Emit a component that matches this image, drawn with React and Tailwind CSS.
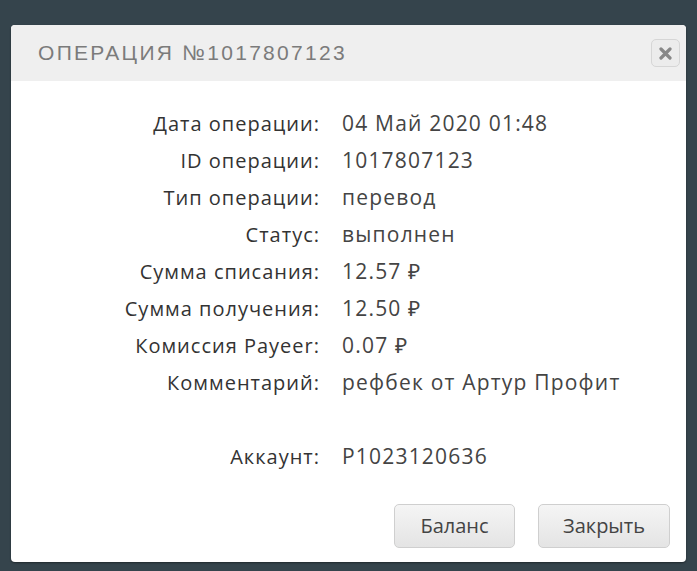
const rows = [
  ['Дата операции:', '04 Май 2020 01:48'],
  ['ID операции:', '1017807123'],
  ['Тип операции:', 'перевод'],
  ['Статус:', 'выполнен'],
  ['Сумма списания:', '12.57 ₽'],
  ['Сумма получения:', '12.50 ₽'],
  ['Комиссия Payeer:', '0.07 ₽'],
  ['Комментарий:', 'рефбек от Артур Профит'],
];

function Row({ label, value }) {
  return (
    <div className="flex h-[37px] items-center">
      <div className="w-[309px] shrink-0 text-right text-[20px] tracking-[1px] text-[#333]">{label}</div>
      <div className="pl-[22px] text-[21px] tracking-[1.2px] text-[#444]">{value}</div>
    </div>
  );
}

export default function App() {
  return (
    <div className="min-h-[571px] bg-[#35444c] pt-[25px] pl-[11px] pr-[11px]">
      <div className="w-[675px] h-[537px] rounded-[4px] bg-white shadow-[0_1px_2px_rgba(0,0,0,0.4)] overflow-hidden flex flex-col">
        <div className="h-[56px] bg-[#efefef] flex items-center justify-between pl-[27px] pr-[6px]">
          <h1 className="text-[21px] tracking-[2.3px] text-[#7b7b7b] font-['Liberation_Sans',sans-serif] uppercase">
            Операция №1017807123
          </h1>
          <button className="w-[29px] h-[28px] rounded-[5px] border border-[#d6d6d6] bg-[#ececec] flex items-center justify-center">
            <svg width="13" height="13" viewBox="0 0 13 13">
              <path d="M2 2 L11 11 M11 2 L2 11" stroke="#888" strokeWidth="3.2" strokeLinecap="round" />
            </svg>
          </button>
        </div>
        <div className="flex-1 font-['Open_Sans',sans-serif] pt-[24px]">
          {rows.map(([l, v]) => (
            <Row key={l} label={l} value={v} />
          ))}
          <div className="h-[37px]" />
          <Row label="Аккаунт:" value="P1023120636" />
        </div>
        <div className="flex justify-end gap-[23px] pr-[16px] pb-[14px] font-['Open_Sans',sans-serif] text-[20px] text-[#444]">
          <button className="w-[121px] h-[44px] rounded-[5px] border border-[#cfcfcf] bg-gradient-to-b from-[#f5f5f5] to-[#e4e4e4]">
            Баланс
          </button>
          <button className="w-[132px] h-[44px] rounded-[5px] border border-[#cfcfcf] bg-gradient-to-b from-[#f5f5f5] to-[#e4e4e4]">
            Закрыть
          </button>
        </div>
      </div>
    </div>
  );
}
